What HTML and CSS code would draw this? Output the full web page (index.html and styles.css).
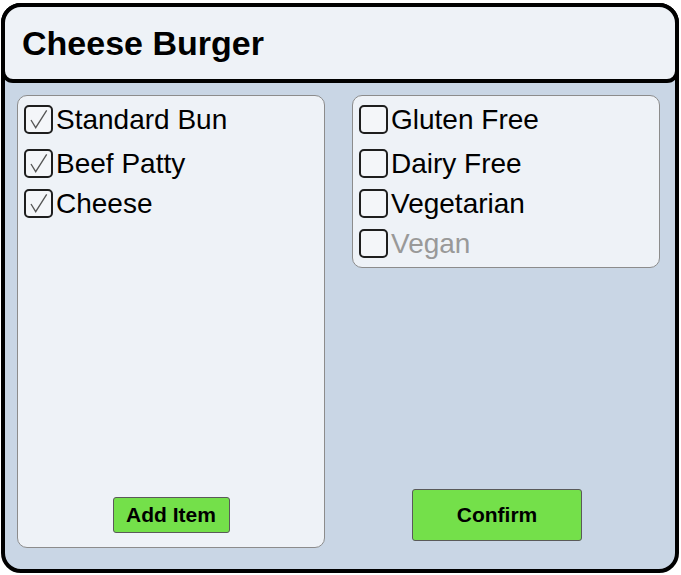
FILE: index.html
```html
<!DOCTYPE html>
<html>
<head>
<meta charset="utf-8">
<link rel="stylesheet" href="styles.css">
</head>
<body>
<div class="frame">
  <div class="header"><h1 class="title">Cheese Burger</h1></div>
  <div class="content">
    <div class="panel panel-left">
      <div class="list">
        <label class="row row-first"><span class="box"><svg viewBox="0 0 29 29" width="29" height="29"><path d="M7 15 L11.7 22.7 L22.7 5.3" fill="none" stroke="#555" stroke-width="1.3"/></svg></span><span class="label">Standard Bun</span></label>
        <label class="row"><span class="box"><svg viewBox="0 0 29 29" width="29" height="29"><path d="M7 15 L11.7 22.7 L22.7 5.3" fill="none" stroke="#555" stroke-width="1.3"/></svg></span><span class="label">Beef Patty</span></label>
        <label class="row"><span class="box"><svg viewBox="0 0 29 29" width="29" height="29"><path d="M7 15 L11.7 22.7 L22.7 5.3" fill="none" stroke="#555" stroke-width="1.3"/></svg></span><span class="label">Cheese</span></label>
      </div>
      <button class="btn btn-add">Add Item</button>
    </div>
    <div class="col-right">
      <div class="panel panel-right">
        <label class="row row-first"><span class="box"></span><span class="label">Gluten Free</span></label>
        <label class="row"><span class="box"></span><span class="label">Dairy Free</span></label>
        <label class="row"><span class="box"></span><span class="label">Vegetarian</span></label>
        <label class="row"><span class="box"></span><span class="label disabled">Vegan</span></label>
      </div>
      <button class="btn btn-confirm">Confirm</button>
    </div>
  </div>
</div>
</body>
</html>
```
FILE: styles.css
```css
html, body {
  margin: 0;
  padding: 0;
  background: #ffffff;
}
body {
  font-family: "Liberation Sans", Arial, sans-serif;
  color: #000;
}
.frame {
  box-sizing: border-box;
  margin: 3px 2px 2px 1px;
  height: 570px;
  border: 4px solid #000;
  border-radius: 20px;
  background: #c9d6e5;
  display: flex;
  flex-direction: column;
}
.header {
  box-sizing: border-box;
  margin: -4px -4px 0 -4px;
  height: 80px;
  border: 4px solid #000;
  border-radius: 20px 20px 12px 12px;
  background: #eef2f7;
  padding: 0 0 0 17px;
  display: flex;
  align-items: center;
}
.title {
  margin: 0;
  font-size: 34px;
  font-weight: bold;
  line-height: 40px;
  padding-bottom: 1px;
}
.content {
  flex: 1;
  display: grid;
  grid-template-columns: 308px 308px;
  column-gap: 27px;
  padding: 12px 15px 21px 12px;
}
.panel {
  box-sizing: border-box;
  border: 1px solid #8c8c8c;
  border-radius: 10px;
  background: #eef2f7;
  padding: 3px 6px 4px 6px;
}
.panel-left {
  display: flex;
  flex-direction: column;
  align-items: center;
  padding-bottom: 14px;
}
.list {
  align-self: stretch;
  flex: 1;
}
.row {
  display: flex;
  align-items: center;
  height: 40px;
}
.row-first {
  margin-bottom: 4px;
}
.box {
  box-sizing: border-box;
  width: 29px;
  height: 29px;
  border: 2px solid #1e1e1e;
  border-radius: 5px;
  background: #f4f6f9;
  display: flex;
  align-items: center;
  justify-content: center;
  margin-right: 3px;
  flex: none;
}
.box svg {
  display: block;
  margin: -2px;
}
.label {
  font-size: 28px;
  line-height: 32px;
  padding-top: 1px;
}
.label.disabled {
  color: #999999;
}
.col-right {
  display: flex;
  flex-direction: column;
  align-items: flex-start;
}
.panel-right {
  align-self: stretch;
}
.btn {
  font-family: "Liberation Sans", Arial, sans-serif;
  font-weight: bold;
  font-size: 21px;
  color: #000;
  background: #74e04a;
  border: 1px solid #5a5a5a;
  border-radius: 3px;
  padding: 0;
}
.btn-add {
  width: 117px;
  height: 36px;
}
.btn-confirm {
  width: 170px;
  height: 52px;
  margin-top: auto;
  margin-left: 60px;
  margin-bottom: 7px;
}
```
